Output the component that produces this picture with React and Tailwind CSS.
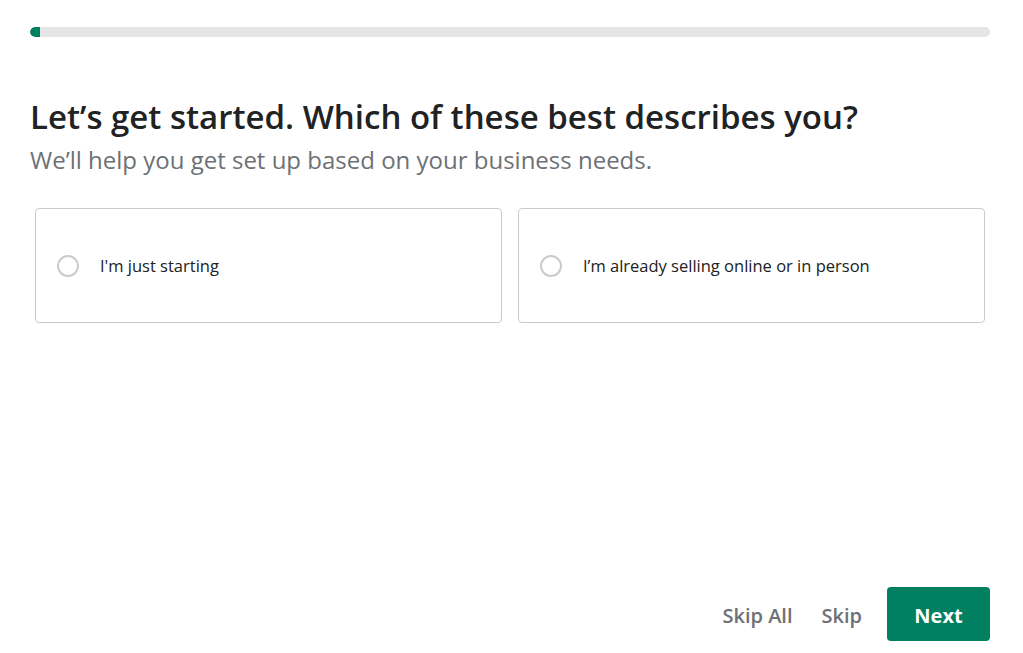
export default function App() {
  const options = ["I'm just starting", "I’m already selling online or in person"];

  return (
    <div
      className="h-screen flex flex-col bg-white pl-[30px] pr-[33px] pt-[27px] pb-[12px]"
      style={{ fontFamily: '"Open Sans", "Noto Sans", sans-serif' }}
    >
      {/* Progress */}
      <div className="h-[10px] w-full rounded-full bg-[#e4e5e7] overflow-hidden">
        <div className="h-full w-[10px] rounded-l-full rounded-r-[2px] bg-[#008060]" />
      </div>

      {/* Heading */}
      <h1 className="mt-[58px] text-[33px] leading-[44px] font-semibold text-[#202223]">
        Let’s get started. Which of these best describes you?
      </h1>
      <p className="mt-[5px] text-[24px] leading-[32px] text-[#6d7175]">
        We’ll help you get set up based on your business needs.
      </p>

      {/* Options */}
      <div className="mt-[32px] mx-[5px] grid grid-cols-2 gap-4">
        {options.map((label) => (
          <label
            key={label}
            className="h-[115px] flex items-center gap-[21px] pl-[21px] pr-[22px] border border-[#c9cccf] rounded-[4px] cursor-pointer"
          >
            <span className="w-[22px] h-[22px] rounded-full border-2 border-[#c9cccf] shrink-0" />
            <span className="pt-[2px] text-[16.5px] text-[#202223]">{label}</span>
          </label>
        ))}
      </div>

      {/* Footer */}
      <div className="mt-auto flex items-center justify-end">
        <button className="pt-[3px] text-[20px] font-semibold text-[#6d7175]">Skip All</button>
        <button className="pt-[3px] ml-[29px] text-[20px] font-semibold text-[#6d7175]">Skip</button>
        <button className="ml-[25px] w-[103px] h-[54px] pt-[3px] rounded-[4px] bg-[#008060] text-white text-[20px] font-bold">
          Next
        </button>
      </div>
    </div>
  );
}
